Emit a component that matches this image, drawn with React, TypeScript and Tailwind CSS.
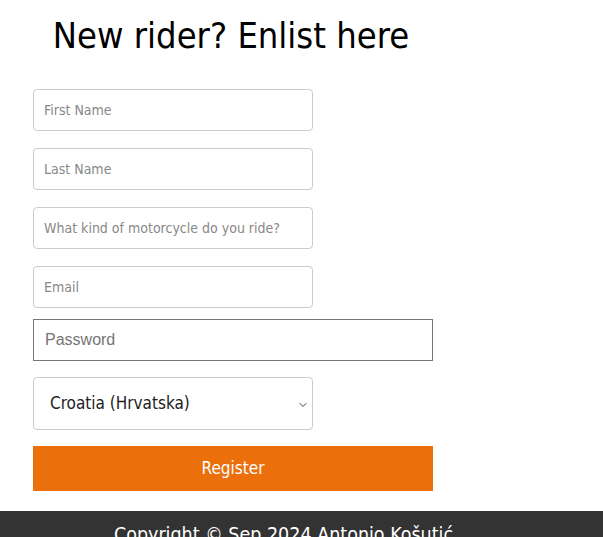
import { ChevronDown } from 'lucide-react'

const font = { fontFamily: '"Liberation Sans Narrow", "DejaVu Sans Condensed", "Roboto", sans-serif' }

function Field({ placeholder }: { placeholder: string }) {
  return (
    <input
      type="text"
      placeholder={placeholder}
      className="block w-[280px] h-[42px] border border-[#cccccc] rounded-[4px] px-[10px] text-[14px] text-[#333] placeholder:text-[#888] outline-none"
      style={font}
    />
  )
}

export default function App() {
  return (
    <div className="w-[603px] h-[537px] overflow-hidden bg-white flex flex-col">
      <div className="pl-[33px] pt-[14px] w-[433px]">
        <h1 className="text-center text-[36px] leading-[44px] text-black pr-[4px]" style={font}>
          New rider? Enlist here
        </h1>
        <form className="mt-[31px] flex flex-col" onSubmit={e => e.preventDefault()}>
          <div className="flex flex-col gap-[17px]">
            <Field placeholder="First Name" />
            <Field placeholder="Last Name" />
            <Field placeholder="What kind of motorcycle do you ride?" />
            <Field placeholder="Email" />
          </div>
          <input
            type="password"
            placeholder="Password"
            className="mt-[11px] block w-[400px] h-[42px] border border-[#767676] px-[11px] text-[16px] placeholder:text-[#757575] outline-none"
            style={{ fontFamily: '"Liberation Sans", Arial, sans-serif' }}
          />
          <div className="relative mt-[16px] w-[280px] h-[53px] border border-[#cccccc] rounded-[4px] flex items-center pl-[16px]">
            <span className="text-[17px] text-[#222]" style={font}>Croatia (Hrvatska)</span>
            <ChevronDown size={12} strokeWidth={2} className="absolute right-[3px] top-[21px] text-[#444]" />
          </div>
          <button
            type="submit"
            className="mt-[16px] w-[400px] h-[45px] bg-[#eb700c] text-white text-[17px]"
            style={font}
          >
            Register
          </button>
        </form>
      </div>
      <footer className="mt-[20px] h-[30px] bg-[#333333] flex justify-center pt-[12px] overflow-hidden">
        <span className="text-white text-[19.5px] leading-[24px] ml-[-36px]" style={font}>
          Copyright © Sep 2024 Antonio Košutić
        </span>
      </footer>
    </div>
  )
}
